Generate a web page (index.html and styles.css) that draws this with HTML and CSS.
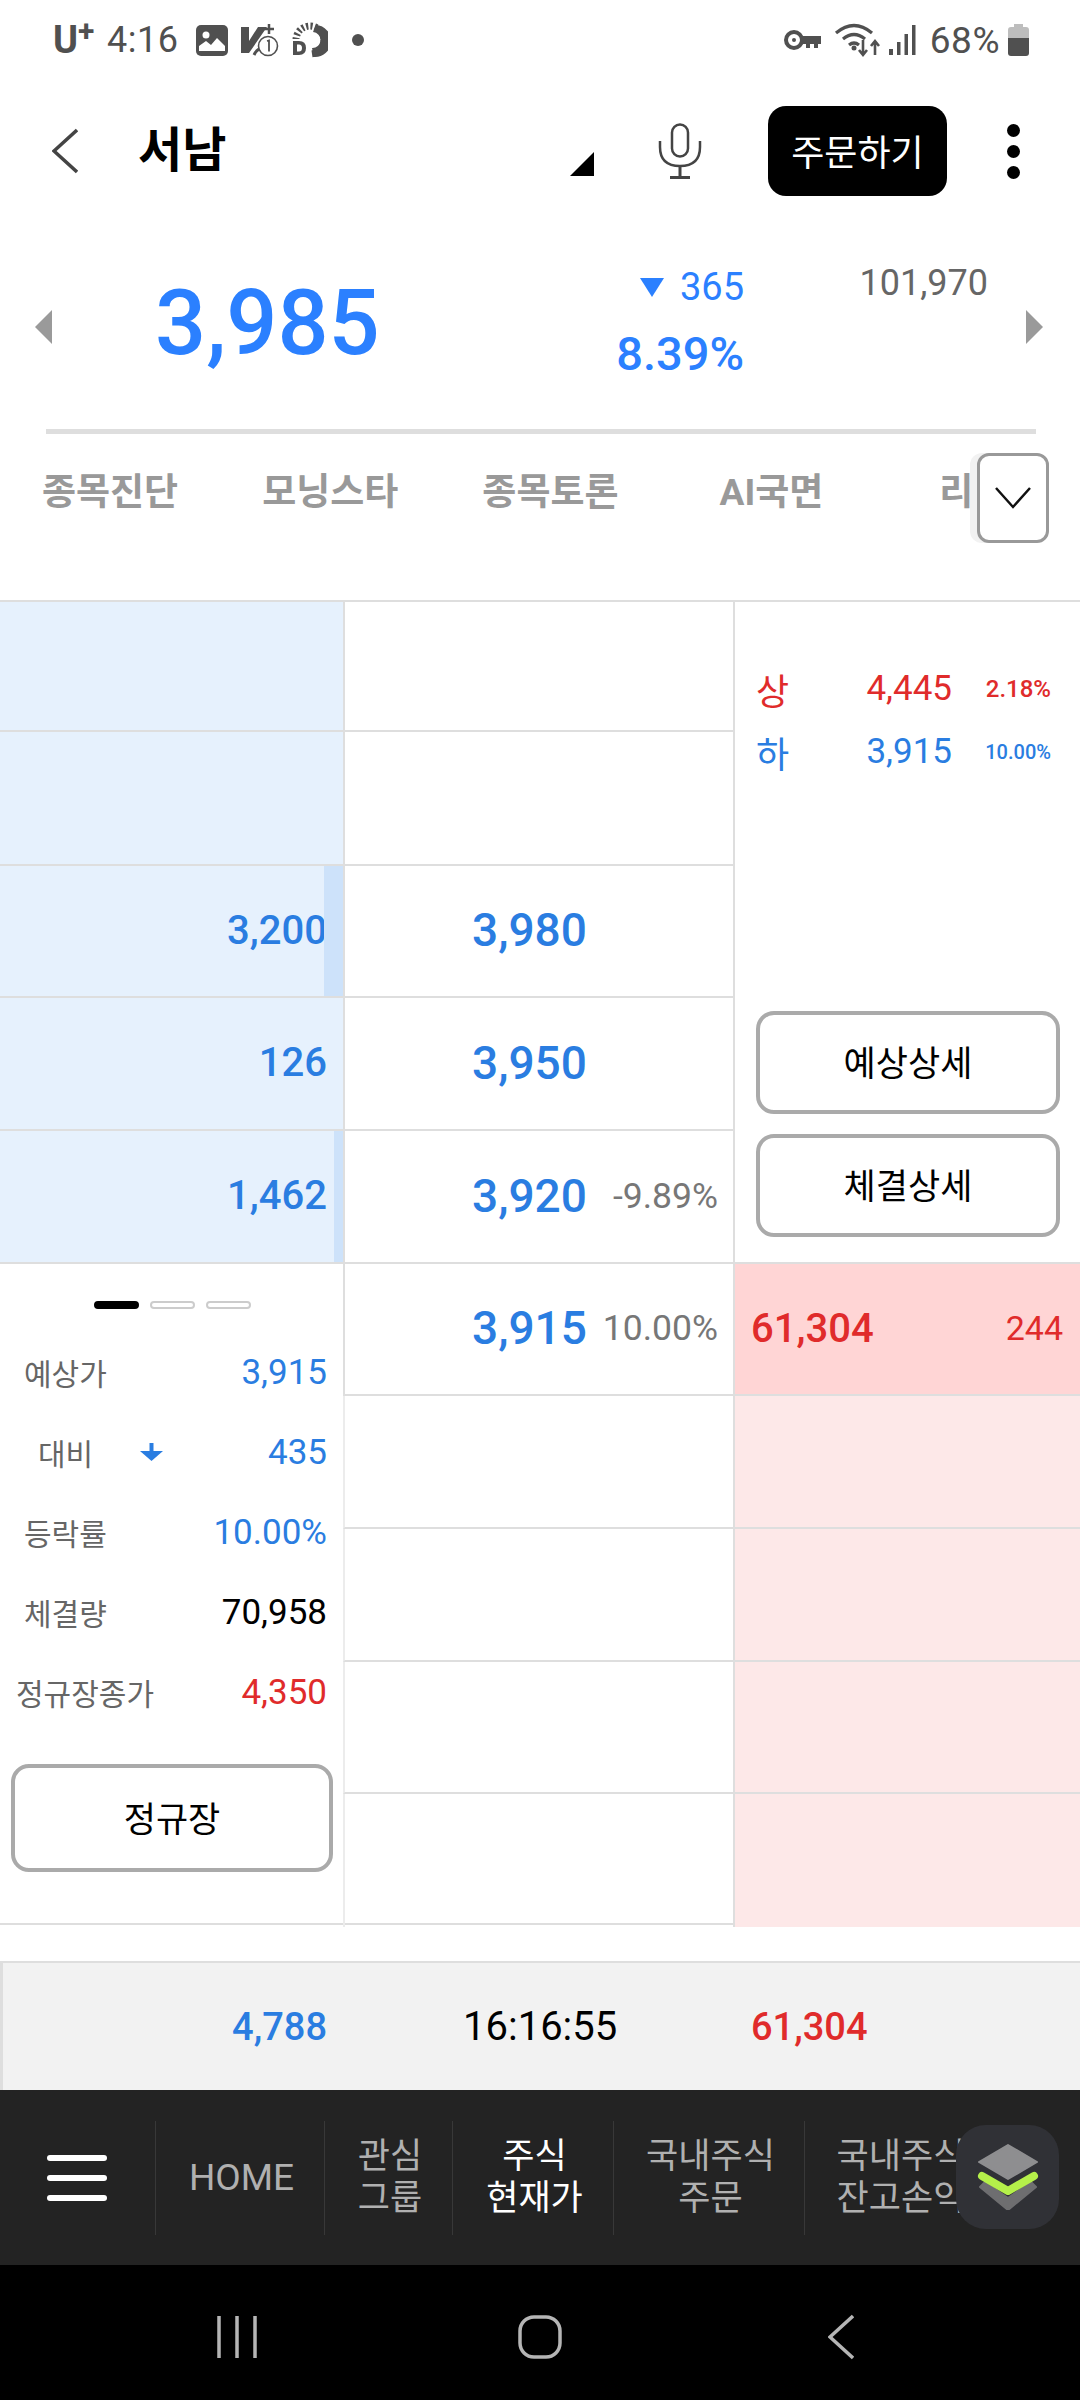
FILE: index.html
```html
<!DOCTYPE html>
<html lang="ko">
<head>
<meta charset="utf-8">
<title>서남 현재가</title>
<link rel="stylesheet" href="styles.css">
</head>
<body>
<div class="statusbar">
  <div class="status-side">
    <span class="carrier">U<sup>+</sup></span>
    <span class="clock">4:16</span>
    <svg class="ic-photo" width="32" height="31" viewBox="0 0 32 31"><rect width="32" height="31" rx="5" fill="#505050"/><circle cx="10" cy="10" r="3.5" fill="#fff"/><path d="M3 26 L3 21 L10 16 L15 20 L21 13 L29 21 L29 26 Z" fill="#fff"/></svg>
    <svg class="ic-v" width="40" height="34" viewBox="0 0 40 34"><path d="M1 4 H9 V18 L18 4 H27 L9 30 H1 Z" fill="#505050"/><path d="M29 1 V11 M24 6 H34" stroke="#505050" stroke-width="2.5"/><path d="M14 32 Q18 24 24 26" stroke="#505050" stroke-width="3" fill="none"/><circle cx="28" cy="23" r="9.5" fill="#fff" stroke="#505050" stroke-width="1.6"/><path d="M27 18 L29 17.5 V28.5" stroke="#505050" stroke-width="1.8" fill="none"/></svg>
    <svg class="ic-d" width="36" height="36" viewBox="0 0 36 36"><circle cx="18" cy="18" r="14" fill="none" stroke="#505050" stroke-width="7" stroke-dasharray="2.2 2.2"/><path d="M24 3 A16 16 0 0 1 22 35 L20 26 A8 8 0 0 0 21 10 Z" fill="#505050"/><rect x="0" y="17" width="18" height="19" fill="#fff"/><path d="M1 19 H7 Q14 19 14 26 Q14 33 7 33 H1 Z M5 22.5 V29.5 H7 Q10 29.5 10 26 Q10 22.5 7 22.5 Z" fill="#505050" fill-rule="evenodd"/></svg>
    <span class="status-dot"></span>
  </div>
  <div class="status-side">
    <svg width="38" height="22" viewBox="0 0 38 22"><circle cx="10" cy="11" r="8" fill="none" stroke="#505050" stroke-width="4"/><circle cx="10" cy="11" r="2" fill="#505050"/><path d="M17 7 H37 V15 H34 V19 H30 V15 H26 V19 H22 V15 H17 Z" fill="#505050"/></svg>
    <svg class="ic-wifi" width="48" height="36" viewBox="0 0 48 36"><path d="M2 11 Q20 -4 38 11 M9 17 Q20 8 31 17 M15 23 Q20 19 25 23" fill="none" stroke="#505050" stroke-width="3.2"/><circle cx="20" cy="26" r="2.5" fill="#505050"/><path d="M29 18 V32 M25 28 L29 33 L33 28 M41 33 V20 M37 24 L41 19 L45 24" fill="none" stroke="#505050" stroke-width="2.6"/></svg>
    <svg class="ic-signal" width="27" height="30" viewBox="0 0 27 30"><rect x="0" y="24" width="4" height="6" fill="#505050"/><rect x="8" y="17" width="3.5" height="13" fill="#505050"/><rect x="15.5" y="9" width="3.5" height="21" fill="#505050"/><rect x="23" y="0" width="3.5" height="30" fill="#505050"/></svg>
    <span class="clock battery-text">68%</span>
    <svg width="21" height="32" viewBox="0 0 21 32"><path d="M6 0 H15 V3 H18 Q21 3 21 6 V14 H0 V6 Q0 3 3 3 H6 Z" fill="#bdbdbd"/><path d="M0 14 H21 V29 Q21 32 18 32 H3 Q0 32 0 29 Z" fill="#505050"/></svg>
  </div>
</div>

<header class="appbar">
  <svg class="back" width="26" height="46" viewBox="0 0 26 46"><path d="M25 2 L2 23 L25 44" fill="none" stroke="#444" stroke-width="3.5"/></svg>
  <h1 class="stock-name">서남</h1>
  <span class="corner-mark"></span>
  <svg class="mic" width="44" height="56" viewBox="0 0 44 56"><rect x="14" y="1.5" width="16" height="32" rx="8" fill="none" stroke="#444" stroke-width="2.5"/><path d="M2 18 V24 Q2 43 22 43 Q42 43 42 24 V18" fill="none" stroke="#444" stroke-width="2.5"/><path d="M22 43 V54 M12 54.5 H32" stroke="#444" stroke-width="3"/></svg>
  <button class="order-btn">주문하기</button>
  <div class="more"><i></i><i></i><i></i></div>
</header>

<section class="quote">
  <span class="tri tri-left"></span>
  <div class="price-now">3,985</div>
  <div class="quote-change">
    <div class="change-amt"><span class="tri-down"></span>365</div>
    <div class="change-pct">8.39%</div>
  </div>
  <div class="volume">101,970</div>
  <span class="tri tri-right"></span>
</section>
<div class="quote-rule"></div>

<nav class="tabs">
  <span class="tab">종목진단</span>
  <span class="tab">모닝스타</span>
  <span class="tab">종목토론</span>
  <span class="tab tab-ai">AI국면</span>
  <span class="tab">리포트</span>
  <div class="tabs-toggle">
    <svg width="36" height="22" viewBox="0 0 36 22"><path d="M1 1 L18 20 L35 1" fill="none" stroke="#111" stroke-width="2.5"/></svg>
  </div>
</nav>

<section class="book">
  <!-- row 1 -->
  <div class="cell ask"></div>
  <div class="cell mid"></div>
  <div class="side-top">
    <div class="limit red"><span class="limit-label">상</span><span class="limit-price">4,445</span><span class="limit-pct">2.18%</span></div>
    <div class="limit blue"><span class="limit-label">하</span><span class="limit-price">3,915</span><span class="limit-pct small">10.00%</span></div>
    <div class="side-btns">
      <button class="line-btn">예상상세</button>
      <button class="line-btn">체결상세</button>
    </div>
  </div>
  <!-- row 2 -->
  <div class="cell ask"></div>
  <div class="cell mid"></div>
  <!-- row 3 -->
  <div class="cell ask"><span class="vol-bar" style="width:19px"></span>3,200</div>
  <div class="cell mid"><b class="px">3,980</b></div>
  <!-- row 4 -->
  <div class="cell ask">126</div>
  <div class="cell mid"><b class="px">3,950</b></div>
  <!-- row 5 -->
  <div class="cell ask"><span class="vol-bar" style="width:9px"></span>1,462</div>
  <div class="cell mid"><b class="px">3,920</b><span class="rate">-9.89%</span></div>
  <!-- row 6 -->
  <div class="side-info">
    <div class="pager"><i class="on"></i><i></i><i></i></div>
    <div class="info-row"><span class="info-label">예상가</span><span class="blue">3,915</span></div>
    <div class="info-row"><span class="info-label indent">대비</span>
      <svg class="down-arrow" width="23" height="18" viewBox="0 0 23 18"><path d="M11.5 0 V9" stroke="#2a7de1" stroke-width="4"/><path d="M0 8 H23 L11.5 18 Z" fill="#2a7de1"/></svg>
      <span class="blue">435</span></div>
    <div class="info-row"><span class="info-label">등락률</span><span class="blue">10.00%</span></div>
    <div class="info-row"><span class="info-label">체결량</span><span>70,958</span></div>
    <div class="info-row"><span class="info-label wide">정규장종가</span><span class="red">4,350</span></div>
    <button class="line-btn session-btn">정규장</button>
  </div>
  <div class="cell mid"><b class="px">3,915</b><span class="rate">10.00%</span></div>
  <div class="cell bid bid-now"><b>61,304</b><span>244</span></div>
  <!-- row 7-10 -->
  <div class="cell mid low"></div><div class="cell bid"></div>
  <div class="cell mid low"></div><div class="cell bid"></div>
  <div class="cell mid low"></div><div class="cell bid"></div>
  <div class="cell mid low"></div><div class="cell bid"></div>
</section>

<section class="summary">
  <b class="sum-ask">4,788</b>
  <span class="sum-time">16:16:55</span>
  <b class="sum-bid">61,304</b>
</section>

<nav class="bottomnav">
  <div class="burger"><i></i><i></i><i></i></div>
  <a class="nav-item nav-home">HOME</a>
  <a class="nav-item nav-group">관심<br>그룹</a>
  <a class="nav-item nav-now">주식<br>현재가</a>
  <a class="nav-item nav-order">국내주식<br>주문</a>
  <a class="nav-item nav-balance">국내주식<br>잔고손익</a>
  <div class="layers">
    <svg width="62" height="66" viewBox="0 0 62 66"><path d="M3 43 L31 66 L59 43 L54 38 L31 54 L8 38 Z" fill="#6e6e70" stroke="#6e6e70" stroke-width="2" stroke-linejoin="round"/><path d="M31 1 L60 18 L31 35 L2 18 Z" fill="#8e8e90" stroke="#8e8e90" stroke-width="2" stroke-linejoin="round"/><path d="M5 32 L31 47 L57 32" fill="none" stroke="#b5f04a" stroke-width="8" stroke-linejoin="round" stroke-linecap="round"/></svg>
  </div>
</nav>

<div class="sysnav">
  <svg width="40" height="44" viewBox="0 0 40 44"><path d="M2 1 V43 M20 1 V43 M38 1 V43" stroke="#b5b5b5" stroke-width="3.5"/></svg>
  <svg class="sys-home" width="44" height="44" viewBox="0 0 44 44"><rect x="2" y="2" width="40" height="40" rx="14" fill="none" stroke="#b5b5b5" stroke-width="3.5"/></svg>
  <svg width="26" height="46" viewBox="0 0 26 46"><path d="M25 2 L2 23 L25 44" fill="none" stroke="#b5b5b5" stroke-width="3.5"/></svg>
</div>
</body>
</html>
```

FILE: styles.css
```css
* {
    box-sizing: border-box;
}
html, body {
    margin: 0;
    padding: 0;
}
body {
    width: 1080px;
    height: 2400px;
    overflow: hidden;
    background: #fff;
    font-family: Roboto, "Noto Sans CJK KR", sans-serif;
    color: #000;
}
button {
    font-family: inherit;
    background: none;
    padding: 0;
}
.blue { color: #2a7de1; }
.red { color: #e02b2b; }

/* status bar */
.statusbar {
    height: 80px;
    display: flex;
    justify-content: space-between;
    align-items: center;
    padding: 0 51px 0 53px;
    color: #505050;
}
.status-side {
    display: flex;
    align-items: center;
}
.carrier {
    font-size: 38px;
    font-weight: 700;
    line-height: 1;
    width: 54px;
}
.carrier sup {
    font-size: 30px;
    vertical-align: 12px;
    line-height: 0;
}
.clock {
    font-size: 36px;
    line-height: 1;
    letter-spacing: 0.5px;
}
.ic-photo { margin-left: 18px; }
.ic-v { margin-left: 12px; }
.ic-d { margin-left: 12px; }
.status-dot {
    width: 12px;
    height: 12px;
    border-radius: 50%;
    background: #505050;
    margin-left: 24px;
}
.ic-wifi { margin-left: 12px; }
.ic-signal { margin-left: 7px; }
.battery-text { margin: 0 8px 0 14px; font-size: 37px; }

/* top app bar */
.appbar {
    height: 142px;
    display: flex;
    align-items: center;
    padding-left: 52px;
}
.stock-name {
    margin: 0 0 0 60px;
    font-size: 48px;
    font-weight: 700;
    line-height: 1;
    width: 432px;
}
.corner-mark {
    width: 0;
    height: 0;
    border-left: 24px solid transparent;
    border-bottom: 24px solid #000;
    margin-top: 26px;
    margin-right: 64px;
}
.order-btn {
    margin-left: 66px;
    width: 179px;
    height: 90px;
    padding-bottom: 3px;
    border: none;
    border-radius: 18px;
    background: #000;
    color: #fff;
    font-size: 36px;
}
.more {
    margin-left: 60px;
    display: flex;
    flex-direction: column;
    gap: 8px;
}
.more i {
    display: block;
    width: 13px;
    height: 13px;
    border-radius: 50%;
    background: #000;
}

/* quote */
.quote {
    height: 207px;
    display: flex;
    padding: 46px 36px 0 35px;
}
.tri {
    width: 0;
    height: 0;
    border-top: 17px solid transparent;
    border-bottom: 17px solid transparent;
    margin-top: 42px;
}
.tri-left { border-right: 17px solid #9a9a9a; }
.tri-right { border-left: 17px solid #9a9a9a; margin-left: 38px; }
.price-now {
    width: 459px;
    padding-left: 103px;
    margin-top: 12px;
    font-size: 90px;
    font-weight: 500;
    line-height: 88px;
    color: #2b80ff;
}
.quote-change {
    width: 233px;
    margin-top: -3px;
    text-align: right;
    color: #2b80ff;
}
.change-amt {
    font-size: 38px;
    line-height: 44px;
    display: flex;
    justify-content: flex-end;
    align-items: center;
    gap: 16px;
    white-space: nowrap;
}
.tri-down {
    width: 0;
    height: 0;
    border-left: 12px solid transparent;
    border-right: 12px solid transparent;
    border-top: 19px solid #2b80ff;
}
.change-pct {
    font-size: 47px;
    font-weight: 500;
    line-height: 46px;
    margin-top: 22px;
    white-space: nowrap;
}
.volume {
    width: 244px;
    margin-top: -5px;
    text-align: right;
    font-size: 36px;
    line-height: 40px;
    color: #666;
}
.quote-rule {
    height: 5px;
    margin: 0 44px 0 46px;
    background: #dedede;
}

/* tabs */
.tabs {
    height: 166px;
    display: flex;
    padding: 21px 0 0 42px;
    gap: 84px;
    overflow: hidden;
    position: relative;
    align-items: flex-start;
    white-space: nowrap;
}
.tab {
    font-size: 37px;
    font-weight: 700;
    line-height: 76px;
    color: #999;
}
.tab-ai {
    margin-left: 17px;
    margin-right: 32px;
}
.tabs-toggle {
    position: absolute;
    top: 19px;
    right: 31px;
    width: 72px;
    height: 90px;
    display: flex;
    align-items: center;
    justify-content: center;
    background: #fff;
    border: 3px solid #999;
    border-radius: 12px;
    box-shadow: -7px 0 0 #f2f2f2;
}

/* order book */
.book {
    display: grid;
    grid-template-columns: 343px 392px 345px;
    grid-template-rows: 130px 134px 132px 133px 133px 132px 133px 133px 132px 133px;
    height: 1325px;
    border-top: 2px solid #dedede;
    border-bottom: 2px solid #dedede;
}
.cell {
    display: flex;
    align-items: center;
    position: relative;
    padding-bottom: 2px;
    border-bottom: 2px solid #dedede;
    font-size: 40px;
    font-weight: 500;
}
.book > .cell:nth-last-child(-n+2) {
    border-bottom: none;
}
.ask {
    grid-column: 1;
    justify-content: flex-end;
    padding-right: 16px;
    background: #e6f1fd;
    color: #2a7de1;
}
.vol-bar {
    position: absolute;
    top: 0;
    right: 0;
    bottom: 0;
    background: #cde2fa;
}
.mid {
    grid-column: 2;
    border-left: 2px solid #dedede;
    border-right: 2px solid #dedede;
    padding-left: 127px;
}
.mid.low {
    border-left-color: #ececec;
}
.px {
    font-size: 46px;
    font-weight: 500;
    color: #2a7de1;
    width: 114px;
    white-space: nowrap;
}
.rate {
    font-size: 35.5px;
    font-weight: 400;
    color: #777;
    width: 132px;
    text-align: right;
}
.bid {
    grid-column: 3;
    background: #fde8e8;
    color: #e02b2b;
}
.bid-now {
    background: #ffd5d5;
    justify-content: space-between;
    padding: 0 17px 2px 16px;
}
.bid-now b {
    font-weight: 500;
    font-size: 40px;
}
.bid-now span {
    font-size: 34px;
    font-weight: 400;
}
.side-top {
    grid-column: 3;
    grid-row: 1 / span 5;
    padding: 55px 20px 0 21px;
    border-bottom: 2px solid #dedede;
    display: flex;
    flex-direction: column;
}
.limit {
    display: flex;
    align-items: center;
    height: 63px;
}
.limit-label {
    font-size: 36px;
    width: 60px;
}
.limit-price {
    width: 136px;
    text-align: right;
    font-size: 35px;
}
.limit-pct {
    width: 99px;
    text-align: right;
    font-size: 24px;
    font-weight: 500;
}
.limit-pct.small {
    font-size: 20px;
}
.side-btns {
    margin-top: 228px;
    display: flex;
    flex-direction: column;
    gap: 20px;
}
.line-btn {
    height: 103px;
    padding-bottom: 4px;
    border: 4px solid #aaa;
    border-radius: 18px;
    background: #fff;
    font-size: 35px;
    color: #000;
}
.side-info {
    grid-column: 1;
    grid-row: 6 / span 5;
    display: flex;
    flex-direction: column;
    padding: 0 16px 0 0;
}
.pager {
    height: 68px;
    padding: 37px 0 0 94px;
    display: flex;
    gap: 11px;
}
.pager i {
    display: block;
    width: 45px;
    height: 8px;
    border-radius: 4px;
    border: 2px solid #ccc;
    background: #fff;
}
.pager i.on {
    background: #000;
    border-color: #000;
}
.info-row {
    height: 80px;
    display: flex;
    align-items: center;
    font-size: 35px;
}
.info-label {
    font-size: 30px;
    color: #666;
    margin-left: 24px;
    margin-right: auto;
}
.info-label.indent {
    margin-left: 38px;
    margin-right: 47px;
}
.info-label.wide {
    margin-left: 16px;
}
.down-arrow {
    margin-right: auto;
}
.session-btn {
    width: 322px;
    height: 108px;
    margin: 32px 0 0 11px;
}

/* summary strip */
.summary {
    height: 129px;
    margin-top: 36px;
    background: #f2f2f2;
    border-top: 2px solid #dedede;
    border-left: 3px solid #dedede;
    display: flex;
    align-items: center;
    font-size: 38px;
}
.summary b {
    font-weight: 500;
}
.sum-ask {
    color: #2a7de1;
    width: 324px;
    text-align: right;
}
.sum-time {
    font-size: 40px;
    margin-left: 136px;
    width: 288px;
}
.sum-bid {
    color: #e02b2b;
}

/* dark bottom nav */
.bottomnav {
    height: 175px;
    background: #232323;
    display: flex;
    align-items: center;
    position: relative;
    overflow: hidden;
}
.burger {
    width: 155px;
    padding-left: 47px;
    display: flex;
    flex-direction: column;
    gap: 14px;
}
.burger i {
    display: block;
    width: 60px;
    height: 6px;
    border-radius: 3px;
    background: #fff;
}
.nav-item {
    height: 114px;
    padding-left: 3px;
    display: flex;
    align-items: center;
    justify-content: center;
    text-align: center;
    border-left: 1px solid #383838;
    font-size: 35px;
    line-height: 42px;
    color: #b0b0b0;
    flex: none;
    white-space: nowrap;
}
.nav-home { width: 169px; font-size: 37px; }
.nav-group { width: 128px; }
.nav-now { width: 161px; color: #fff; }
.nav-order { width: 191px; }
.nav-balance { width: 190px; }
.layers {
    position: absolute;
    top: 35px;
    left: 956px;
    width: 103px;
    height: 104px;
    border-radius: 30px;
    background: #303136;
    display: flex;
    align-items: center;
    justify-content: center;
}

/* android nav */
.sysnav {
    height: 135px;
    padding: 8px 226px 0 217px;
    background: #000;
    display: flex;
    align-items: center;
    justify-content: space-between;
}
.sys-home {
    margin-right: 6px;
}
```
